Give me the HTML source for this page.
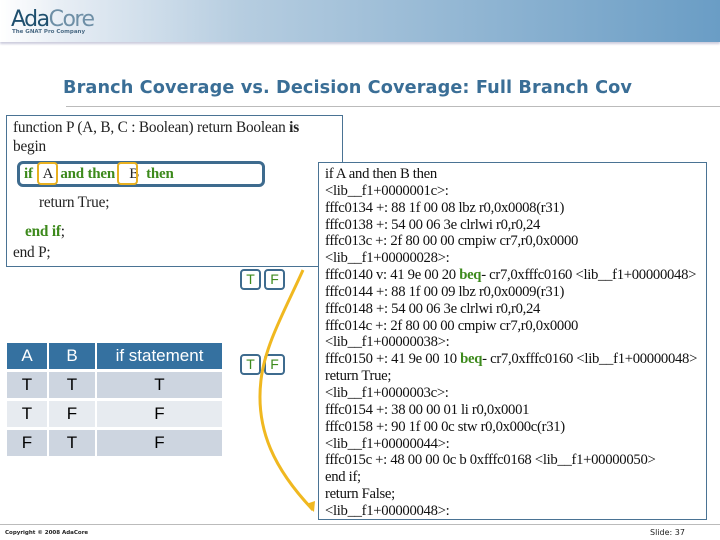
<!DOCTYPE html>
<html><head><style>
body{margin:0;width:720px;height:540px;position:relative;background:#fff;overflow:hidden;font-family:"Liberation Serif",serif}
.abs{position:absolute}
.hdr{left:0;top:0;width:720px;height:42px;background:linear-gradient(90deg,#fff 0,#e8eef5 60px,#b6cde0 240px,#6a9dc5 720px);box-shadow:0 2px 2px #ccd}
.title{left:63px;top:78px;font:bold 17.7px "DejaVu Sans",sans-serif;color:#3a6e96;letter-spacing:0.1px}
.code{left:6px;top:115px;width:335px;height:150px;border:1px solid #4a7394;font-size:15.3px;color:#222;line-height:20px;letter-spacing:-0.2px}
.g{color:#3d8a1c;font-weight:bold}
.asm{left:318px;top:162px;width:389px;height:358px;border:1px solid #4a7394;background:#fff;font-size:14.7px;line-height:16.85px;color:#111;padding:3px 0 0 6px;box-sizing:border-box;letter-spacing:-0.3px;white-space:nowrap}
.tf{width:17px;height:17px;border:2px solid #3e6b8e;border-radius:4px;color:#3d8a1c;font:14px "Liberation Sans",sans-serif;text-align:center;line-height:17px}
.yb{border:2px solid #e8b020;border-radius:4px;height:19px}
table{border-collapse:separate;border-spacing:2px 3px;font:17px "Liberation Sans",sans-serif}
td{text-align:center;height:26px;padding:0}
</style></head><body>
<div class="abs hdr"></div>
<div class="abs" style="left:11px;top:7px;font:22px 'DejaVu Sans',sans-serif;letter-spacing:-1.5px;color:#1e4f6e">Ada<span style="color:#6e8fa6">Core</span></div>
<div class="abs" style="left:12px;top:29px;font:bold 5.5px 'DejaVu Sans',sans-serif;color:#4a6a84">The GNAT Pro Company</div>
<div class="abs title">Branch Coverage vs. Decision Coverage: Full Branch Cov</div>
<div class="abs" style="left:66px;top:106px;width:654px;height:1px;background:#bbb"></div>

<div class="abs code">
<div style="position:absolute;left:6px;top:2px">function P (A, B, C : Boolean) return Boolean <b>is</b></div>
<div style="position:absolute;left:6px;top:21px">begin</div>
<div style="position:absolute;left:10px;top:45px;width:242px;height:20px;border:3px solid #3e6b8e;border-radius:6px"></div>
<div style="position:absolute;left:17px;top:48px;font-size:15px"><span class="g">if</span>&nbsp;&nbsp; A&nbsp; <span class="g">and then</span>&nbsp;&nbsp;&nbsp; B&nbsp; <span class="g">then</span></div>
<div style="position:absolute;left:30px;top:46px;width:17px" class="yb"></div>
<div style="position:absolute;left:110px;top:46px;width:17px" class="yb"></div>
<div style="position:absolute;left:32px;top:77px">return True;</div>
<div style="position:absolute;left:18px;top:106px"><span class="g">end if</span>;</div>
<div style="position:absolute;left:6px;top:127px">end P;</div>
</div>

<div class="abs tf" style="left:240px;top:269px">T</div>
<div class="abs tf" style="left:264px;top:269px">F</div>
<div class="abs tf" style="left:240px;top:354px">T</div>
<div class="abs tf" style="left:264px;top:354px">F</div>

<svg class="abs" style="left:0;top:0" width="720" height="540"><path d="M303 270 C285 310 265 345 261 380 C255 430 275 470 313 510" fill="none" stroke="#f0b820" stroke-width="3"/><path d="M306 504 L314 512 L315 501 Z" fill="#f0b820"/></svg>

<table class="abs" style="left:5px;top:340px">
<tr style="background:#3571a0;color:#fff"><td style="width:40px">A</td><td style="width:46px">B</td><td style="width:125px;font-size:17px">if statement</td></tr>
<tr style="background:#cdd5e0"><td>T</td><td>T</td><td>T</td></tr>
<tr style="background:#e7ebf0"><td>T</td><td>F</td><td>F</td></tr>
<tr style="background:#cdd5e0"><td>F</td><td>T</td><td>F</td></tr>
</table>

<div class="abs asm">if A and then B then<br>&lt;lib__f1+0000001c&gt;:<br>fffc0134 +: 88 1f 00 08 lbz r0,0x0008(r31)<br>fffc0138 +: 54 00 06 3e clrlwi r0,r0,24<br>fffc013c +: 2f 80 00 00 cmpiw cr7,r0,0x0000<br>&lt;lib__f1+00000028&gt;:<br>fffc0140 v: 41 9e 00 20 <span class="g">beq</span>- cr7,0xfffc0160 &lt;lib__f1+00000048&gt;<br>fffc0144 +: 88 1f 00 09 lbz r0,0x0009(r31)<br>fffc0148 +: 54 00 06 3e clrlwi r0,r0,24<br>fffc014c +: 2f 80 00 00 cmpiw cr7,r0,0x0000<br>&lt;lib__f1+00000038&gt;:<br>fffc0150 +: 41 9e 00 10 <span class="g">beq</span>- cr7,0xfffc0160 &lt;lib__f1+00000048&gt;<br>return True;<br>&lt;lib__f1+0000003c&gt;:<br>fffc0154 +: 38 00 00 01 li r0,0x0001<br>fffc0158 +: 90 1f 00 0c stw r0,0x000c(r31)<br>&lt;lib__f1+00000044&gt;:<br>fffc015c +: 48 00 00 0c b 0xfffc0168 &lt;lib__f1+00000050&gt;<br>end if;<br>return False;<br>&lt;lib__f1+00000048&gt;:</div>

<div class="abs" style="left:0;top:524px;width:720px;height:1px;background:#bbb"></div>
<div class="abs" style="left:5px;top:530px;font:bold 5.5px 'DejaVu Sans',sans-serif;color:#222">Copyright © 2008 AdaCore</div>
<div class="abs" style="left:650px;top:528px;font:8px 'DejaVu Sans',sans-serif;color:#222">Slide: 37</div>
</body></html>
